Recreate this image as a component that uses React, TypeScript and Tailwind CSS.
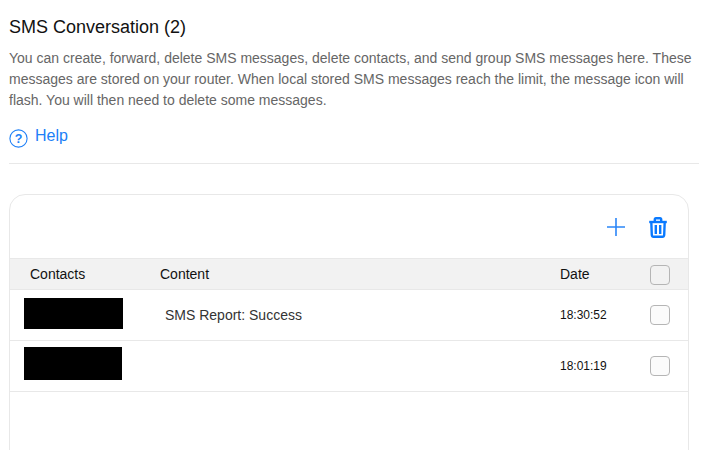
const font = { fontFamily: '"Liberation Sans", Arial, sans-serif' };

function HelpIcon() {
  return (
    <svg width="19" height="19" viewBox="0 0 19 19" fill="none">
      <circle cx="9.5" cy="9.5" r="8.6" stroke="#2080f7" strokeWidth="1.1" />
      <text x="9.5" y="14" textAnchor="middle" fontSize="12.5" fontWeight="700" fill="#2080f7" fontFamily="Liberation Sans">
        ?
      </text>
    </svg>
  );
}

function PlusIcon() {
  return (
    <svg width="20" height="20" viewBox="0 0 20 20" fill="none">
      <path d="M10 1v18M1 10h18" stroke="#2b86f8" strokeWidth="1.6" />
    </svg>
  );
}

function TrashIcon() {
  return (
    <svg width="20" height="21" viewBox="0 0 20 21" fill="none" stroke="#0a7aff" strokeWidth="2.4">
      <path d="M1.2 5h17.6" />
      <path d="M6.8 4.5V2.6c0-.7.5-1.4 1.2-1.4h4c.7 0 1.200.7 1.200 1.400v1.900" />
      <path d="M3.300 5l.5 13c.1 1 .7 1.800 1.700 1.800h9c1 0 1.600-.8 1.700-1.800l.5-13" />
      <path d="M7.800 8v9M12.200 8v9" />
    </svg>
  );
}

function Box({ tint }: { tint: string }) {
  return <div className={`h-5 w-5 rounded-[4px] border border-[#b5b5b5] ${tint}`} />;
}

const rows = [
  { barW: "w-[99px]", barH: "h-[31px]", barPos: "mb-[3px]", text: "SMS Report: Success", time: "18:30:52" },
  { barW: "w-[98px]", barH: "h-[33px]", barPos: "mb-[5px]", text: "", time: "18:01:19" },
];

export default function App() {
  return (
    <div className="h-[450px] w-[724px] overflow-hidden bg-white pl-[9px] pr-[25px] pt-[17px]" style={font}>
      <h1 className="text-[18px] font-normal leading-[21px] text-[#111]">SMS Conversation (2)</h1>
      <p className="mt-[10px] text-[14px] leading-[21px] text-[#666]">
        You can create, forward, delete SMS messages, delete contacts, and send group SMS messages here. These
        messages are stored on your router. When local stored SMS messages reach the limit, the message icon will
        flash. You will then need to delete some messages.
      </p>
      <div className="mt-[16px] flex items-start gap-[7px]">
        <div className="mt-[2px]">
          <HelpIcon />
        </div>
        <span className="text-[16px] leading-[18px] text-[#2080f7]">Help</span>
      </div>
      <div className="mt-[15px] h-px bg-[#e8e8e8]" />
      <div className="mt-[30px] h-[300px] w-[680px] rounded-t-[16px] border border-[#e8e8e8]">
        <div className="flex h-[63px] items-center justify-end gap-[22px] pr-5 pt-px">
          <PlusIcon />
          <TrashIcon />
        </div>
        <div className="flex h-[32px] items-center border-y border-[#e8e8e8] bg-[#f2f2f2] pt-px text-[14px] text-[#111]">
          <span className="w-[150px] pl-5">Contacts</span>
          <span className="w-[400px]">Content</span>
          <span className="w-[90px]">Date</span>
          <Box tint="bg-[#f2f2f2]" />
        </div>
        {rows.map((r) => (
          <div key={r.time} className="flex h-[51px] items-center border-b border-[#e8e8e8]">
            <div className="w-[150px] pl-[14px]">
              <div className={`bg-black ${r.barW} ${r.barH} ${r.barPos}`} />
            </div>
            <span className="w-[400px] pl-[5px] text-[14px] text-[#333]">{r.text}</span>
            <span className="w-[90px] text-[12px] text-[#111]">{r.time}</span>
            <Box tint="bg-[#fbfbfb]" />
          </div>
        ))}
      </div>
    </div>
  );
}
